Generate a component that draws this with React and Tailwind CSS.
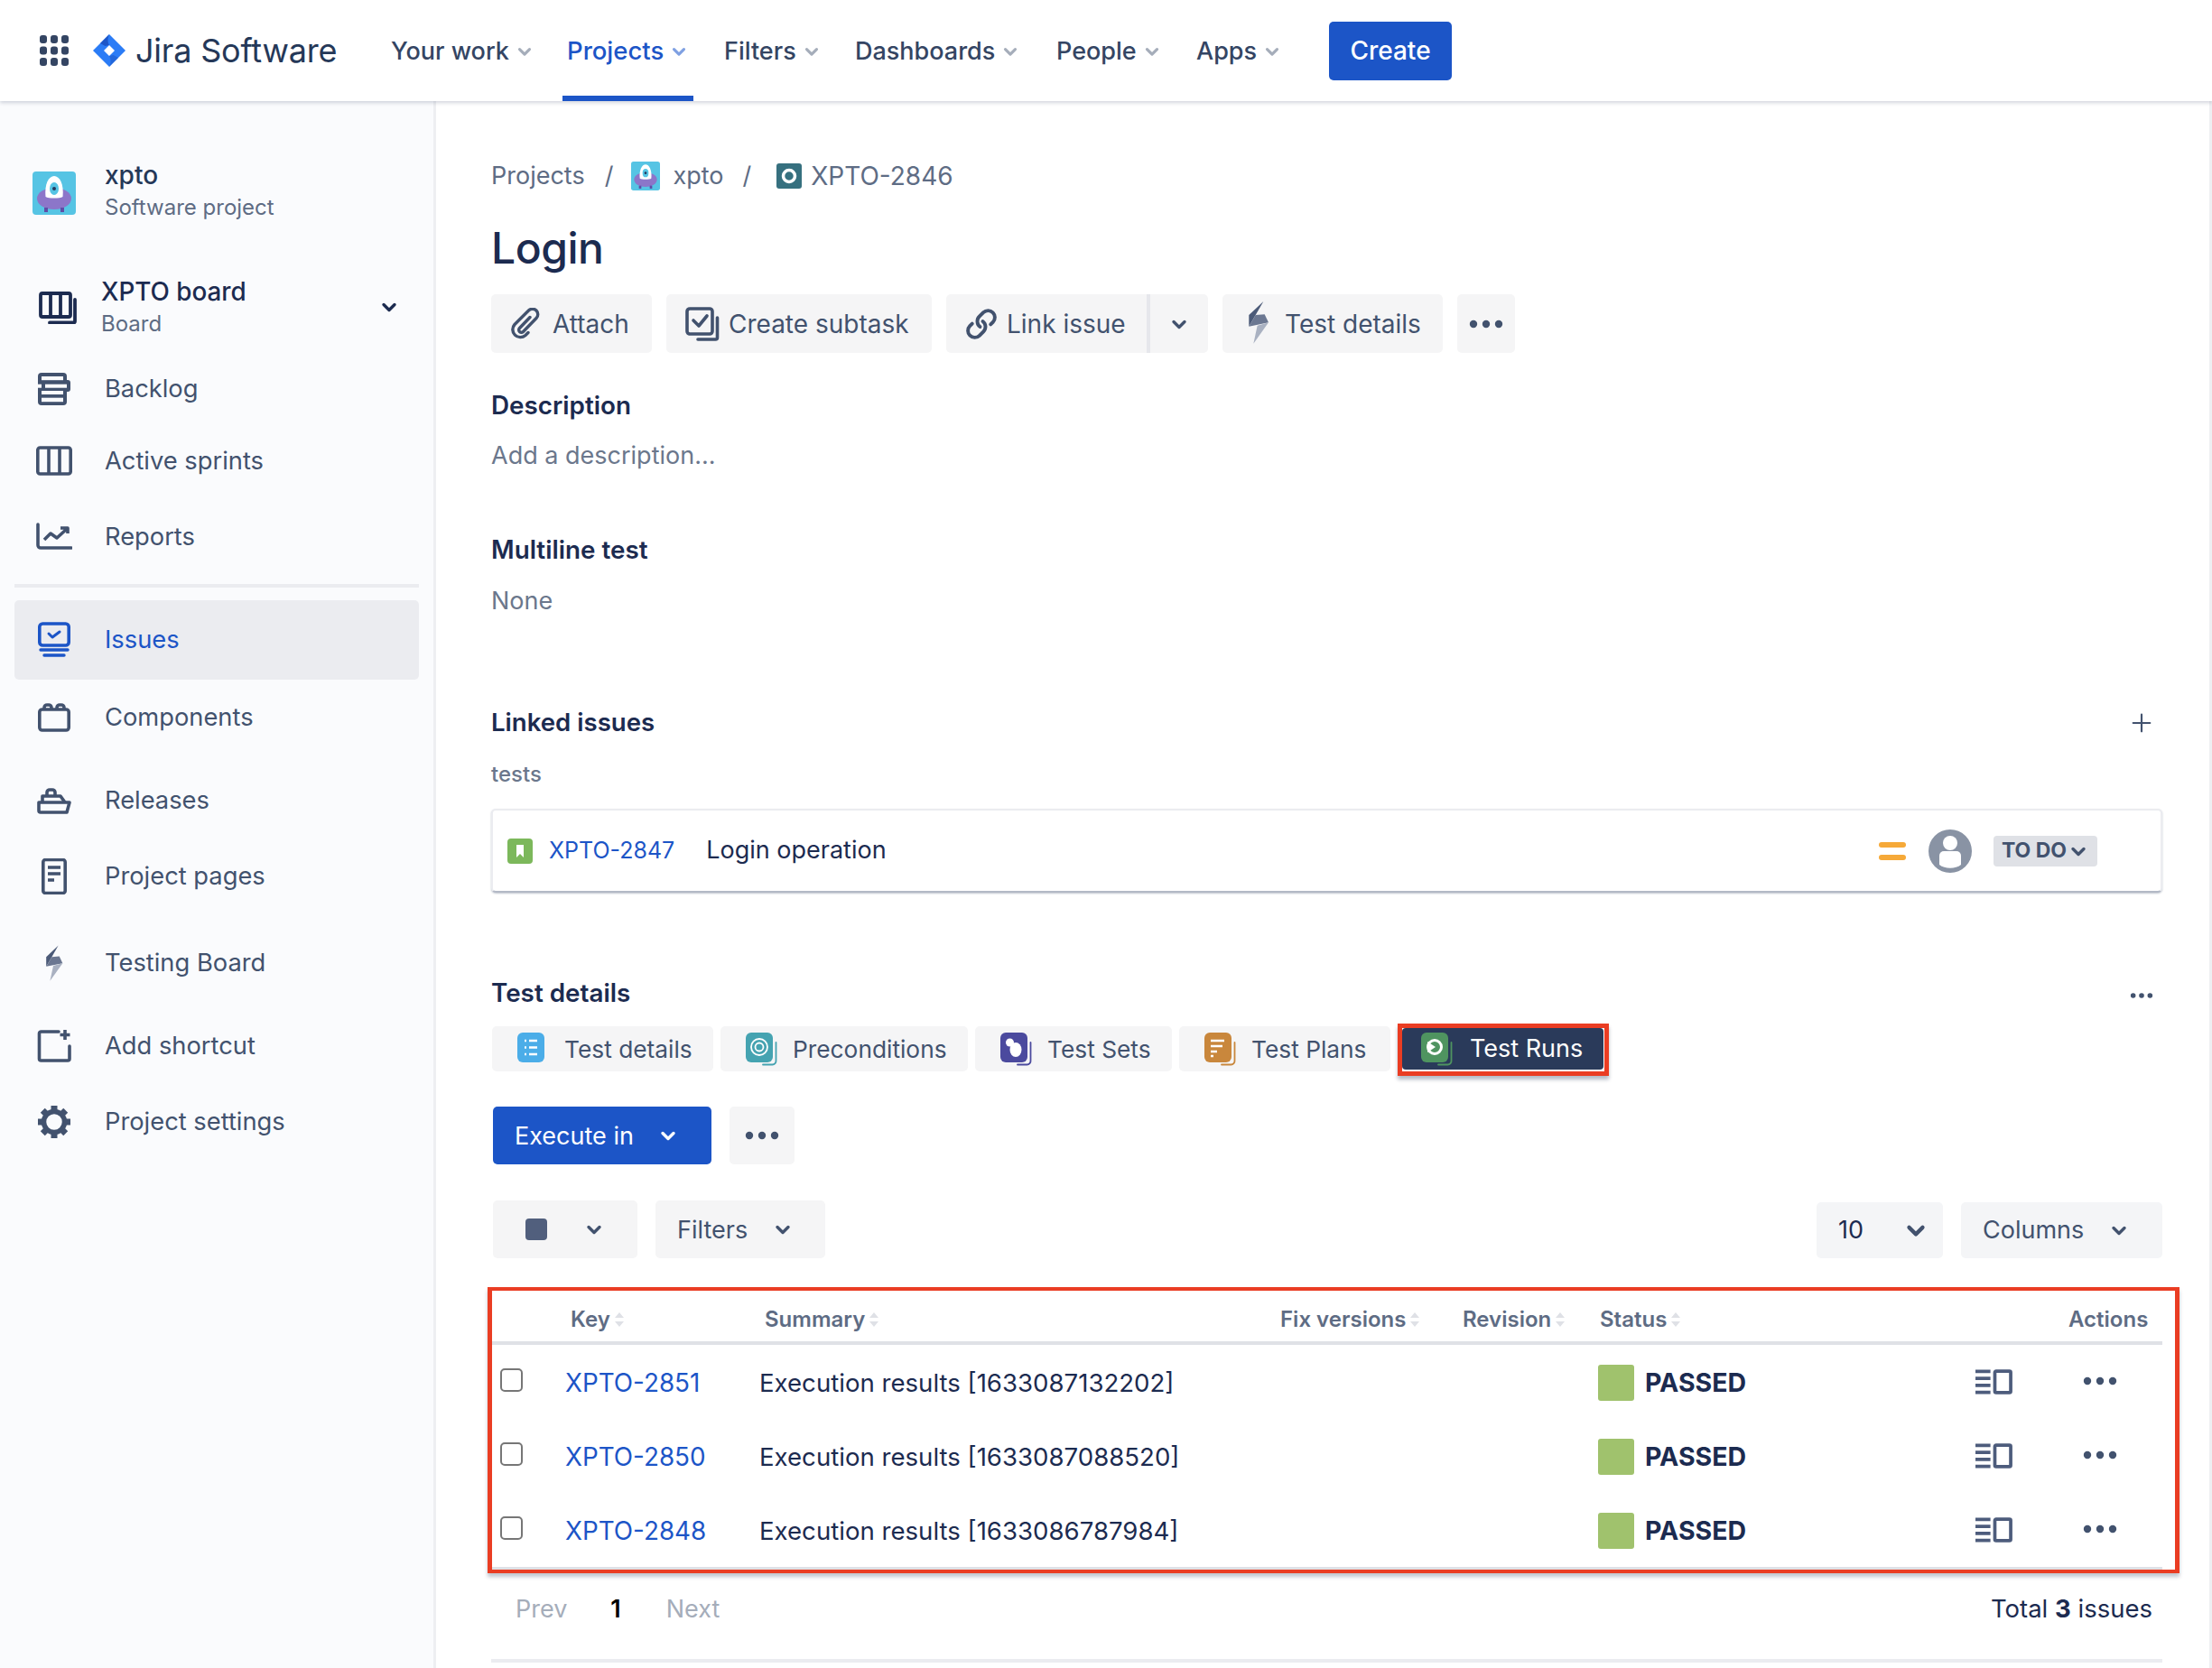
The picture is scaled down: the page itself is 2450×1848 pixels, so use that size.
import React from "react";
import { Link as LinkIcon, Plus } from "lucide-react";

const Chevron = ({ className = "w-[24px] h-[24px] text-[#42526e]" }) => (
  <svg viewBox="0 0 24 24" className={className} fill="none">
    <path d="M6 9.500l6 6 6-6" stroke="currentColor" strokeWidth="3.400" strokeLinecap="round" strokeLinejoin="round" />
  </svg>
);

const Dots = ({ className = "w-[38px] h-[12px] text-[#42526e]" }) => (
  <svg viewBox="0 0 38 12" className={className} fill="currentColor">
    <circle cx="5" cy="6" r="4.200" />
    <circle cx="19" cy="6" r="4.200" />
    <circle cx="33" cy="6" r="4.200" />
  </svg>
);

const GridIcon = () => (
  <svg viewBox="0 0 32 34" className="w-[32px] h-[34px] text-[#344563]" fill="currentColor">
    {[0, 12.5, 25].map((y) =>
      [0, 12, 24].map((x) => <rect key={`${x}-${y}`} x={x} y={y} width="8" height="9" rx="3" />)
    )}
  </svg>
);

const JiraLogo = () => (
  <svg viewBox="0 0 36 36" className="w-[36px] h-[36px]">
    <path fillRule="evenodd" d="M18 0l18 18-18 18L0 18zM18 12l-6 6 6 6 6-6z" fill="#2b7cf6" />
    <path d="M18 0L8 10l5.500 3 4.500-1c-2-3-2-8 0-12z" fill="#1c55c7" />
    <path d="M18 36l10-10-5.500-3-4.500 1c2 3 2 8 0 12z" fill="#1c55c7" opacity="0.55" />
  </svg>
);

const ProjectAvatar = ({ className }) => (
  <svg viewBox="0 0 48 48" className={className}>
    <rect width="48" height="48" rx="4" fill="#56c4e4" />
    <ellipse cx="24" cy="30" rx="19" ry="12" fill="#8c76c9" />
    <rect x="13" y="40" width="4" height="5" fill="#5f4da6" />
    <rect x="31" y="40" width="4" height="5" fill="#5f4da6" />
    <path d="M14.500 28C13 14 18 5 24 5s11 9 9.500 23c-3 2-16 2-19 0z" fill="#fff" />
    <ellipse cx="24" cy="19" rx="5" ry="7" fill="#56c4e4" />
    <circle cx="24" cy="19" r="2" fill="#26385c" />
  </svg>
);

const BoltPaths = () => (
  <>
    <path d="M88 15L40 60v38l22-38z" fill="#4b5a78" />
    <path d="M62 60l30-2 13 27-65 13z" fill="#6b7791" />
    <path d="M105 85L55 155l13-60z" fill="#a9b1c1" />
  </>
);

const BoardIcon = () => (
  <svg viewBox="0 0 42 36" className="w-[42px] h-[36px] text-[#1c2b50]" fill="none" stroke="currentColor" strokeWidth="3.800">
    <rect x="2" y="2" width="33" height="26" rx="2" />
    <path d="M13 2v26M24 2v26" />
    <path d="M40 9v24a1.500 1.500 0 0 1-1.500 1.500H12" strokeLinecap="round" />
  </svg>
);

// sidebar icons
const line = { fill: "none", stroke: "currentColor", strokeWidth: 3.600 };

const SideIcon = ({ name }) => {
  const cls = "w-[40px] h-[40px]";
  if (name === "backlog")
    return (
      <svg viewBox="0 0 40 40" className={cls}>
        <rect x="2" y="2" width="32" height="36" rx="4" fill="currentColor" />
        <rect x="28" y="10" width="10" height="13" rx="3" fill="currentColor" />
        <g fill="#fafbfd">
          <rect x="6" y="6" width="24" height="4.200" />
          <rect x="0" y="14.700" width="6" height="4" />
          <rect x="10" y="14.700" width="24" height="4" />
          <rect x="6" y="22" width="24" height="4" />
          <rect x="6" y="29.700" width="24" height="4.500" />
        </g>
      </svg>
    );
  if (name === "sprints")
    return (
      <svg viewBox="0 0 40 40" className={cls} {...line}>
        <rect x="1.800" y="5" width="36.400" height="29" rx="2.500" />
        <path d="M14 5v29M26 5v29" />
      </svg>
    );
  if (name === "reports")
    return (
      <svg viewBox="0 0 40 40" className={cls} {...line}>
        <path d="M2 6v23a3 3 0 0 0 3 3h34" strokeLinecap="round" />
        <path d="M9 23l7-7 7 5 11-10M27 10h8v6" strokeLinejoin="round" />
      </svg>
    );
  if (name === "issues")
    return (
      <svg viewBox="0 0 40 40" className={cls} fill="none" stroke="currentColor" strokeWidth="3.600">
        <rect x="3.800" y="2" width="32.400" height="24" rx="3.500" />
        <path d="M14 13l4 4 8-6" strokeWidth="3" strokeLinecap="round" strokeLinejoin="round" />
        <path d="M5 31h30M9 37h22" strokeWidth="3.400" strokeLinecap="round" />
      </svg>
    );
  if (name === "components")
    return (
      <svg viewBox="0 0 40 40" className={cls} {...line}>
        <rect x="3.800" y="11" width="32.400" height="23" rx="3" />
        <path d="M9 11V9a3 3 0 0 1 3-3h2a3 3 0 0 1 3 3v2M23 11V9a3 3 0 0 1 3-3h2a3 3 0 0 1 3 3v2" />
      </svg>
    );
  if (name === "releases")
    return (
      <svg viewBox="0 0 40 40" className={cls} {...line}>
        <path d="M3 22h34l-3 11H5a2 2 0 0 1-2-2z" strokeLinejoin="round" />
        <path d="M7 22v-7h20l5 7M12 15v-4a3 3 0 0 1 3-3h3a3 3 0 0 1 3 3v4" strokeLinejoin="round" />
      </svg>
    );
  if (name === "pages")
    return (
      <svg viewBox="0 0 40 40" className={cls} {...line}>
        <rect x="7.800" y="1.500" width="24.400" height="37" rx="2.500" />
        <path d="M13 10h14M13 17h14M13 24h7" />
      </svg>
    );
  if (name === "bolt")
    return (
      <svg viewBox="0 13 143 143" className={cls}>
        <BoltPaths />
      </svg>
    );
  if (name === "shortcut")
    return (
      <svg viewBox="0 0 40 40" className={cls} {...line}>
        <path d="M25 4H5.500A2 2 0 0 0 3.500 6v28a2 2 0 0 0 2 2H35a2 2 0 0 0 2-2V20" strokeLinecap="round" />
        <path d="M32 2v11M26.500 7.500h11" />
      </svg>
    );
  return (
    <svg viewBox="0 0 40 40" className={cls} fill="none" stroke="currentColor">
      <circle cx="20" cy="20" r="11.500" strokeWidth="5.500" />
      {[0, 45, 90, 135, 180, 225, 270, 315].map((a) => (
        <path key={a} d="M20 2v6" strokeWidth="7" transform={`rotate(${a} 20 20)`} />
      ))}
    </svg>
  );
};

const TabIcon = ({ bg, stack, children }) => (
  <svg viewBox="0 0 36 38" className="w-[36px] h-[38px] shrink-0">
    {stack && <path d="M34.500 12v20a4 4 0 0 1-4 4.500H20" fill="none" stroke={stack} strokeWidth="1.800" strokeLinecap="round" />}
    <rect x="1" y="1" width="30" height="33" rx="6" fill={bg} />
    {children}
  </svg>
);

const tabIcons = {
  details: (
    <TabIcon bg="#4bade8">
      <path d="M9 10h2M14 10h9M9 17.500h2M14 17.500h9M9 25h2M14 25h9" stroke="#fff" strokeWidth="2.400" />
    </TabIcon>
  ),
  pre: (
    <TabIcon bg="#45a3b1" stack="#45a3b1">
      <circle cx="16" cy="17" r="9" fill="none" stroke="#fff" strokeWidth="1.800" />
      <circle cx="16" cy="17" r="4.500" fill="none" stroke="#fff" strokeWidth="1.800" />
    </TabIcon>
  ),
  sets: (
    <TabIcon bg="#4b4a9e" stack="#4b4a9e">
      <circle cx="11.500" cy="12" r="4.500" fill="#fff" />
      <ellipse cx="18" cy="20" rx="6.500" ry="8" fill="#fff" />
    </TabIcon>
  ),
  plans: (
    <TabIcon bg="#c9873c" stack="#c9873c">
      <path d="M8 10h15M8 16h13M8 22h7M8 27h3" stroke="#fff" strokeWidth="2.600" />
    </TabIcon>
  ),
  runs: (
    <TabIcon bg="#4f9460" stack="#4f9460">
      <circle cx="16" cy="17" r="7.500" fill="none" stroke="#fff" strokeWidth="3" />
      <path d="M8 11l9 6-9 6z" fill="#fff" />
    </TabIcon>
  ),
};

const DetailIcon = () => (
  <svg viewBox="0 0 42 28" className="w-[41px] h-[28px] text-[#4d5c7c]" fill="none" stroke="currentColor">
    <path d="M0 2h17M0 10h17M0 18h17M0 26h17" strokeWidth="3.800" />
    <rect x="22" y="1.800" width="18" height="24.400" rx="1.500" strokeWidth="3.800" />
  </svg>
);

const Sort = () => (
  <svg viewBox="0 0 12 18" className="w-[12px] h-[18px] ml-[4px] inline-block text-[#dfe1e6]" fill="currentColor">
    <path d="M6 1l5 6H1zM6 17l5-6H1z" />
  </svg>
);

// ---- data
const navItems = [
  { label: "Your work", cls: "w-[195px]" },
  { label: "Projects", cls: "w-[174px]", active: true },
  { label: "Filters", cls: "w-[145px]" },
  { label: "Dashboards", cls: "w-[223px]" },
  { label: "People", cls: "w-[155px]" },
  { label: "Apps", cls: "w-[152px]" },
];

const sideItems = [
  { icon: "backlog", label: "Backlog", cls: "h-[56px] mt-0" },
  { icon: "sprints", label: "Active sprints", cls: "h-[56px] mt-[24px]" },
  { icon: "reports", label: "Reports", cls: "h-[56px] mt-[28px]" },
  { divider: true },
  { icon: "issues", label: "Issues", cls: "h-[88px] mt-[14px]", active: true },
  { icon: "components", label: "Components", cls: "h-[56px] mt-[14px]" },
  { icon: "releases", label: "Releases", cls: "h-[56px] mt-[36px]" },
  { icon: "pages", label: "Project pages", cls: "h-[56px] mt-[28px]" },
  { icon: "bolt", label: "Testing Board", cls: "h-[56px] mt-[40px]" },
  { icon: "shortcut", label: "Add shortcut", cls: "h-[56px] mt-[36px]" },
  { icon: "settings", label: "Project settings", cls: "h-[56px] mt-[28px]" },
];

const tabs = [
  { icon: "details", label: "Test details", cls: "w-[245px]" },
  { icon: "pre", label: "Preconditions", cls: "w-[274px]" },
  { icon: "sets", label: "Test Sets", cls: "w-[218px]" },
  { icon: "plans", label: "Test Plans", cls: "w-[234px]" },
];

const rows = [
  { key: "XPTO-2851", summary: "Execution results [1633087132202]" },
  { key: "XPTO-2850", summary: "Execution results [1633087088520]" },
  { key: "XPTO-2848", summary: "Execution results [1633086787984]" },
];

const tableCols = "grid grid-cols-[81px_216px_570px_202px_152px_414px_110px_1fr] items-center";

export default function App() {
  return (
    <div className="h-[1848px] w-[2450px] flex flex-col overflow-hidden bg-white font-['Inter',sans-serif] text-[27px] text-[#42526e] antialiased">
      {/* top bar */}
      <header className="relative z-10 h-[112px] flex items-center bg-white shadow-[0_2px_4px_rgba(9,30,66,0.18)] shrink-0">
        <div className="ml-[44px]">
          <GridIcon />
        </div>
        <div className="ml-[27px]">
          <JiraLogo />
        </div>
        <span className="ml-[11px] w-[278px] text-[36px] font-normal tracking-[-0.2px] text-[#253858]">Jira Software</span>
        <nav className="h-full flex items-center">
          {navItems.map((n) => (
            <div key={n.label} className={`h-full ${n.cls}`}>
              <div
                className={`h-full inline-flex items-center gap-[6px] pt-[2px] px-[5px] border-y-[6px] border-t-transparent ${
                  n.active ? "border-b-[#1c55c7] text-[#1c55c7] font-medium text-[27.500px]" : "border-b-transparent text-[#344563] font-medium"
                }`}
              >
                {n.label}
                <Chevron className={`w-[22px] h-[22px] ${n.active ? "text-[#7fa0e2]" : "text-[#a5adba]"}`} />
              </div>
            </div>
          ))}
        </nav>
        <button className="w-[136px] h-[65px] rounded-[5px] bg-[#1c55c7] text-[28px] text-white font-medium">Create</button>
      </header>

      <div className="flex flex-1 min-h-0">
        {/* sidebar */}
        <aside className="w-[483px] shrink-0 bg-[#fafbfd] border-r-[3px] border-[#eeeff2]">
          <div className="mt-[68px] ml-[36px] flex items-center">
            <ProjectAvatar className="w-[48px] h-[48px]" />
            <div className="ml-[32px] -mt-[4px]">
              <div className="leading-[36px] text-[28px] font-medium text-[#253858]">xpto</div>
              <div className="text-[24px] leading-[36px] text-[#5e6c84]">Software project</div>
            </div>
          </div>
          <div className="mt-[57px] ml-[43px] w-[400px] flex items-center">
            <BoardIcon />
            <div className="ml-[27px] flex-1">
              <div className="leading-[36px] text-[27.800px] font-medium text-[#1c2b50]">XPTO board</div>
              <div className="text-[24px] leading-[36px] text-[#5e6c84]">Board</div>
            </div>
            <Chevron className="w-[24px] h-[24px] -mt-[2px] text-[#1c2b50]" />
          </div>
          <div className="mt-[26px]">
            {sideItems.map((s) =>
              s.divider ? (
                <div key="divider" className="mt-[24px] mx-[16px] h-[4px] w-[448px] bg-[#ebecf0]" />
              ) : (
                <div
                  key={s.label}
                  className={`flex items-center mx-[16px] w-[448px] rounded-[5px] ${s.cls} ${
                    s.active ? "bg-[#ebecf0] text-[#1c55c7]" : "text-[#42526e]"
                  }`}
                >
                  <div className="ml-[24px] w-[40px]">
                    <SideIcon name={s.icon} />
                  </div>
                  <span className="ml-[36px] text-[27.300px]">{s.label}</span>
                </div>
              )
            )}
          </div>
        </aside>

        {/* issue view */}
        <main className="flex-1 min-w-0 pl-[61px] pr-[52px] border-r-[3px] border-[#eeeff2]">
          <div className="mt-[62px] h-[40px] flex items-center pt-[2px] text-[#5e6c84]">
            <span>Projects</span>
            <span className="ml-[22px]">/</span>
            <ProjectAvatar className="ml-[20px] w-[32px] h-[32px]" />
            <span className="ml-[14px]">xpto</span>
            <span className="ml-[21px]">/</span>
            <svg viewBox="0 0 28 28" className="ml-[28px] w-[28px] h-[28px]">
              <rect width="28" height="28" rx="3" fill="#36707f" />
              <circle cx="14" cy="14" r="6.500" fill="none" stroke="#fff" strokeWidth="3.500" />
            </svg>
            <span className="ml-[10px] text-[28px]">XPTO-2846</span>
          </div>
          <h1 className="mt-[31px] h-[60px] leading-[60px] text-[48px] font-medium tracking-[-0.5px] text-[#1c2b50]">Login</h1>

          <div className="mt-[21px] h-[65px] flex gap-[16px] text-[28px]">
            <div className="w-[178px] flex items-center pl-[21px] rounded-[5px] bg-[#f5f5f6]">
              <svg viewBox="0 0 34 36" className="w-[34px] h-[36px]" fill="none" stroke="currentColor" strokeWidth="3.400" strokeLinecap="round">
                <path d="M22 10.500L10.500 22.500a2.800 2.800 0 0 0 4 4L29 11.500a6 6 0 0 0-8.500-8.500L5 18.500a8.500 8.500 0 0 0 12 12l3-3" />
              </svg>
              <span className="ml-[13px]">Attach</span>
            </div>
            <div className="w-[294px] flex items-center pl-[21px] rounded-[5px] bg-[#f5f5f6]">
              <svg viewBox="0 0 38 38" className="w-[38px] h-[38px]" fill="none" stroke="currentColor" strokeWidth="3.600">
                <rect x="2" y="2" width="28" height="28" rx="3" />
                <path d="M9 15l6 6 9-11" strokeLinecap="round" strokeLinejoin="round" />
                <path d="M35.500 12v22a2 2 0 0 1-2 2H14" strokeLinecap="round" />
              </svg>
              <span className="ml-[10px]">Create subtask</span>
            </div>
            <div className="w-[290px] flex rounded-[5px] bg-[#f5f5f6]">
              <div className="w-[226px] flex items-center pl-[21px] border-r-[4px] border-[#e6e7ec]">
                <LinkIcon className="w-[36px] h-[36px] scale-x-[-1] rotate-90" strokeWidth={2.600} />
                <span className="ml-[10px]">Link issue</span>
              </div>
              <div className="flex-1 flex items-center justify-center">
                <Chevron />
              </div>
            </div>
            <div className="w-[244px] flex items-center pl-[16px] rounded-[5px] bg-[#f5f5f6]">
              <svg viewBox="0 0 150 180" className="w-[50px] h-[60px]">
                <BoltPaths />
              </svg>
              <span className="ml-[3px]">Test details</span>
            </div>
            <div className="w-[64px] flex items-center justify-center rounded-[5px] bg-[#f5f5f6]">
              <Dots />
            </div>
          </div>

          <div className="mt-[39px] h-[36px] leading-[39px] text-[27.800px] font-semibold text-[#1c2b50]">Description</div>
          <div className="mt-[19px] h-[36px] leading-[39px] text-[#6b778c]">Add a description...</div>
          <div className="mt-[69px] h-[36px] leading-[39px] text-[27.800px] font-semibold text-[#1c2b50]">Multiline test</div>
          <div className="mt-[20px] h-[36px] leading-[39px] text-[#6b778c]">None</div>

          <div className="mt-[100px] h-[36px] flex items-center justify-between pt-[2px] text-[27.600px] font-semibold text-[#1c2b50]">
            <span>Linked issues</span>
            <Plus className="mr-[7px] w-[32px] h-[32px] text-[#42526e]" strokeWidth={1.600} />
          </div>
          <div className="mt-[25px] h-[30px] leading-[30px] text-[24px] font-medium text-[#6b778c]">tests</div>

          <div className="mt-[23px] h-[93px] flex items-center rounded-[5px] border-2 border-[#ebecf0] border-b-[#b3b9c6] shadow-[0_1px_2px_rgba(9,30,66,0.25)] bg-white">
            <svg viewBox="0 0 28 28" className="ml-[16px] w-[28px] h-[28px]">
              <rect width="28" height="28" rx="4" fill="#7cb85b" />
              <path d="M10 7h8v14l-4-4-4 4z" fill="#fff" />
            </svg>
            <span className="ml-[18px] text-[25px] text-[#1c55c7]">XPTO-2847</span>
            <span className="ml-[35px] text-[#1c2b50]">Login operation</span>
            <div className="ml-auto flex items-center">
              <svg viewBox="0 0 30 20" className="w-[30px] h-[20px]" fill="#f6a938">
                <rect width="30" height="6" rx="3" />
                <rect y="14" width="30" height="6" rx="3" />
              </svg>
              <svg viewBox="0 0 48 48" className="ml-[25px] w-[48px] h-[48px]">
                <circle cx="24" cy="24" r="24" fill="#8993a4" />
                <circle cx="24" cy="15" r="8" fill="#fff" />
                <path d="M12 29a5 5 0 0 1 5-5h14a5 5 0 0 1 5 5v10c-6 5-18 5-24 0z" fill="#fff" />
              </svg>
              <div className="ml-[24px] mr-[70px] h-[34px] w-[115px] flex items-center justify-center gap-[1px] rounded-[4px] bg-[#dfe1e6] text-[23px] font-bold text-[#42526e]">
                TO DO
                <Chevron className="w-[24px] h-[24px] text-[#42526e]" />
              </div>
            </div>
          </div>

          <div className="mt-[93px] h-[36px] flex items-center justify-between pt-[2px] text-[27.800px] font-semibold text-[#1c2b50]">
            <span>Test details</span>
            <Dots className="mr-[10px] mt-[4px] w-[26px] h-[8px] text-[#42526e]" />
          </div>

          {/* tabs */}
          <div className="mt-[19px] h-[50px] flex ml-[1px] gap-[8px]">
            {tabs.map((t) => (
              <div key={t.label} className={`h-[50px] flex items-center pl-[27px] rounded-[5px] bg-[#f5f5f6] ${t.cls}`}>
                {tabIcons[t.icon]}
                <span className="ml-[17px] pt-[1px] text-[26.300px]">{t.label}</span>
              </div>
            ))}
            <div className="h-[58px] -mt-[3px] w-[234px] border-[5px] border-[#ea3d23] bg-white pr-[1px] shadow-[0_4px_4px_rgba(9,30,66,0.3)]">
              <div className="h-[46px] flex items-center pl-[20px] rounded-[4px] bg-[#2a3a5a] text-white">
                {tabIcons.runs}
                <span className="ml-[19px] pt-[1px]">Test Runs</span>
              </div>
            </div>
          </div>

          <div className="mt-[39px] h-[64px] flex ml-[2px] gap-[20px]">
            <div className="w-[242px] flex items-center pl-[24px] rounded-[5px] bg-[#1c55c7] text-white">
              <span className="pt-[2px]">Execute in</span>
              <Chevron className="ml-[26px] w-[24px] h-[24px] text-white" />
            </div>
            <div className="w-[72px] flex items-center justify-center rounded-[5px] bg-[#f5f5f6]">
              <Dots />
            </div>
          </div>

          <div className="mt-[40px] h-[64px] flex ml-[2px]">
            <div className="w-[160px] flex items-center pl-[36px] rounded-[5px] bg-[#f5f5f6]">
              <div className="w-[24px] h-[24px] rounded-[4px] bg-[#515f7d]" />
              <Chevron className="ml-[40px] w-[24px] h-[24px] text-[#42526e]" />
            </div>
            <div className="ml-[20px] w-[188px] flex items-center pl-[24px] rounded-[5px] bg-[#f5f5f6]">
              <span className="pt-[2px]">Filters</span>
              <Chevron className="ml-[27px] w-[24px] h-[24px] text-[#42526e]" />
            </div>
            <div className="ml-auto mt-[2px] w-[140px] flex items-center pl-[24px] rounded-[5px] bg-[#f4f5f7] text-[#1c2b50]">
              <span>10</span>
              <Chevron className="ml-[43px] w-[30px] h-[30px] text-[#42526e]" />
            </div>
            <div className="ml-[20px] mt-[2px] w-[223px] flex items-center pl-[24px] rounded-[5px] bg-[#f4f5f7]">
              <span>Columns</span>
              <Chevron className="ml-[27px] w-[24px] h-[24px] text-[#42526e]" />
            </div>
          </div>

          {/* runs table */}
          <div className="mt-[32px] -ml-[4px] -mr-[19px] h-[317px] border-x-[5px] border-y-[4px] border-[#ea3d23] pr-[14px] shadow-[0_4px_4px_rgba(9,30,66,0.25)]">
            <div className={`${tableCols} h-[60px] pt-[7px] border-b-[4px] border-[#dfe1e6] text-[24px] font-semibold text-[#5e6c84]`}>
              <div />
              <div className="pl-[6px] flex items-center">Key<Sort /></div>
              <div className="pl-[5px] flex items-center">Summary<Sort /></div>
              <div className="pl-[6px] flex items-center">Fix versions<Sort /></div>
              <div className="pl-[6px] flex items-center">Revision<Sort /></div>
              <div className="pl-[6px] flex items-center">Status<Sort /></div>
              <div />
              <div className="pl-[1px]">Actions</div>
            </div>
            {rows.map((r) => (
              <div key={r.key} className={`${tableCols} h-[82px]`}>
                <div className="pl-[9px] flex">
                  <input type="checkbox" readOnly className="-mt-[4px] w-[25px] h-[26px] appearance-none rounded-[5px] border-2 border-[#767676] bg-white" />
                </div>
                <span className="pt-[3px] text-[27.800px] text-[#1c55c7]">{r.key}</span>
                <span className="-ml-[1px] pt-[3px] text-[27.600px] text-[#1c2b50]">{r.summary}</span>
                <div />
                <div />
                <div className="pl-[4px] pt-[2px] flex items-center">
                  <div className="w-[40px] h-[40px] rounded-[3px] bg-[#a0c26d]" />
                  <span className="ml-[12px] text-[28.500px] font-bold text-[#1c2b50]">PASSED</span>
                </div>
                <div className="pl-[8px]">
                  <DetailIcon />
                </div>
                <div className="pl-[17px] -mt-[2px]">
                  <Dots />
                </div>
              </div>
            ))}
            <div className="h-[3px] bg-[#dfe1e6]" />
          </div>

          <div className="mt-[21px] h-[36px] flex items-center pt-[2px]">
            <span className="ml-[27px] text-[#a5adba]">Prev</span>
            <span className="ml-[48px] font-semibold text-black">1</span>
            <span className="ml-[50px] text-[#a5adba]">Next</span>
            <span className="ml-auto mr-[11px] text-[27.500px] text-[#1c2b50]">
              Total <span className="font-bold">3</span> issues
            </span>
          </div>
          <div className="mt-[38px] h-[4px] bg-[#ebecf0]" />
        </main>
      </div>
    </div>
  );
}
